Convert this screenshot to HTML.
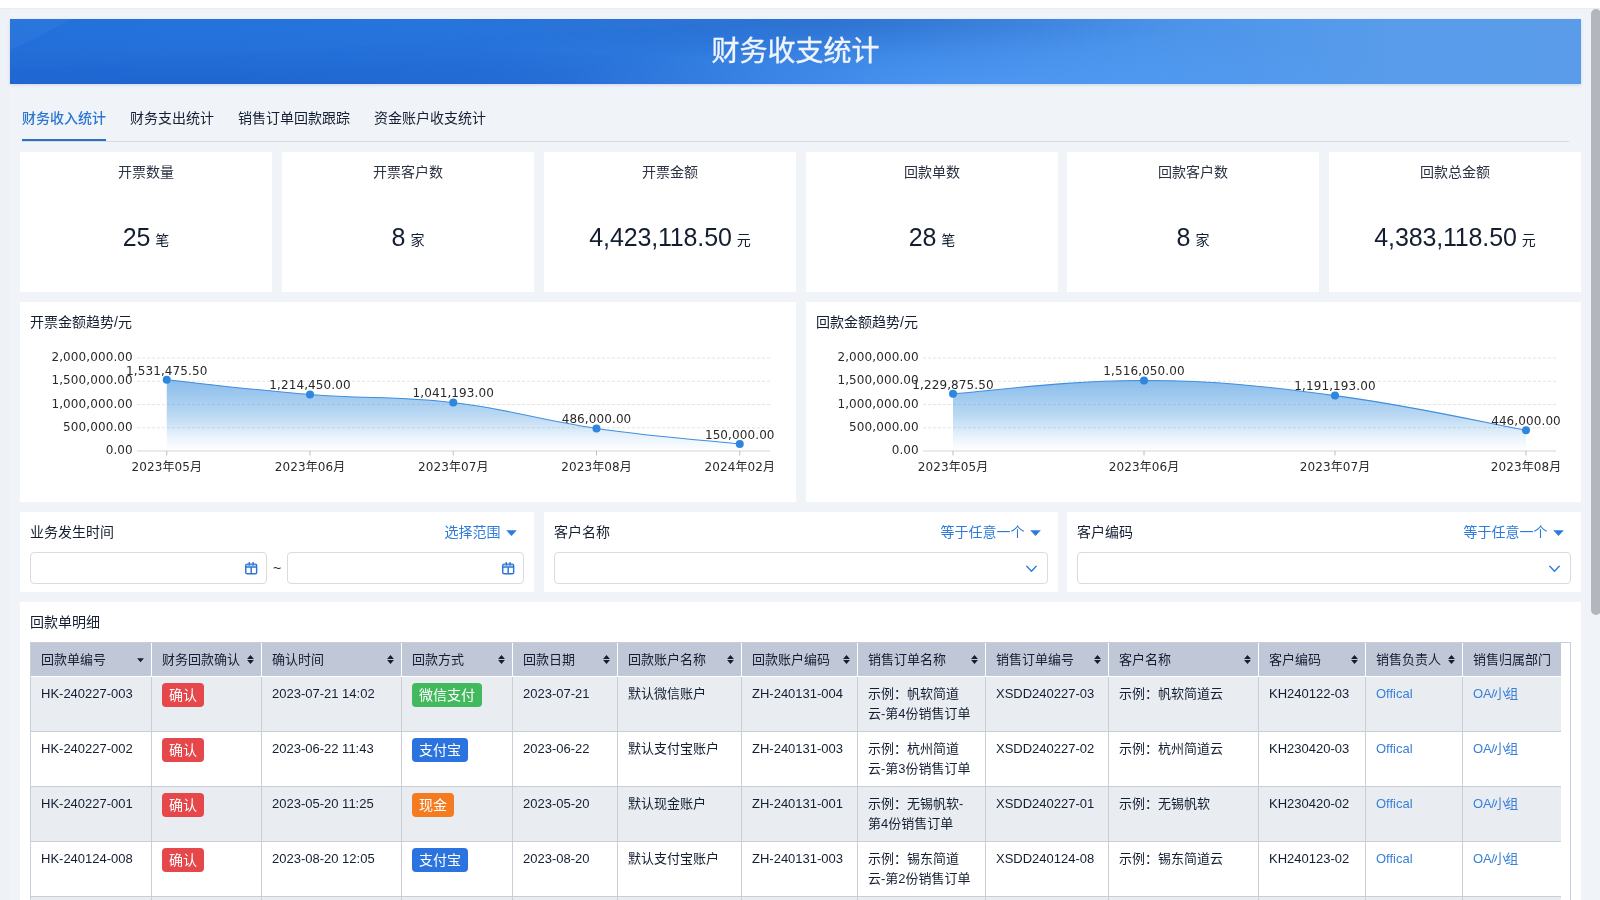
<!DOCTYPE html>
<html lang="zh-CN">
<head>
<meta charset="utf-8">
<title>财务收支统计</title>
<style>
*{box-sizing:border-box}
html,body{margin:0;padding:0}
body{width:1600px;height:900px;overflow:hidden;position:relative;background:#eef1f6;font-family:"Liberation Sans","Noto Sans CJK SC",sans-serif;color:#141e31;font-size:14px}
.page{position:absolute;left:0;top:0;width:1600px;height:900px;overflow:hidden;will-change:transform}
.topstrip{position:absolute;left:0;top:0;width:1600px;height:9px;background:#fff;border-bottom:1px solid #e9ecf1}
.main{position:absolute;left:10px;top:9px;width:1581px;height:891px;background:#f0f4f8}
.sbtrack{position:absolute;left:1581px;top:9px;width:19px;height:891px;background:#f0f4f8}
.sbthumb{position:absolute;left:1591px;top:9px;width:10px;height:606px;border-radius:5px;background:#b3b6bd}
.banner{position:absolute;left:10px;top:19px;width:1571px;height:65px;overflow:hidden;
 background:radial-gradient(ellipse 420px 60px at 62% 105%,rgba(90,165,255,.5),rgba(90,165,255,0) 100%),radial-gradient(ellipse 380px 50px at 52% -10%,rgba(25,70,160,.26),rgba(25,70,160,0) 100%),radial-gradient(ellipse 760px 55px at 14% -5%,rgba(30,120,230,.4),rgba(30,120,230,0) 100%),radial-gradient(ellipse 700px 45px at 12% 108%,rgba(26,88,196,.4),rgba(26,88,196,0) 100%),linear-gradient(90deg,#1f6bd7 0%,#2570d9 30%,#347fe0 52%,#4a93ea 72%,#589ceb 88%,#5a9cea 100%);box-shadow:0 1px 3px rgba(40,80,160,.18)}
.banner .waves{position:absolute;left:0;top:0}
.banner h1{position:absolute;left:0;top:2px;width:100%;margin:0;text-align:center;font-weight:400;font-size:28px;line-height:62px;color:#f1f5fb;letter-spacing:0;-webkit-text-stroke:0.35px #f1f5fb}
.tabs{position:absolute;left:22px;top:98px;width:1547px;height:44px;border-bottom:1px solid #d7dbe1;display:flex}
.tab{height:43px;line-height:40px;font-size:14px;margin-right:24px;color:#141e31;position:relative;white-space:nowrap}
.tab.on{color:#2a76d2;font-weight:500}
.tab.on:after{content:"";position:absolute;left:0;right:0;bottom:0;height:2px;background:#2e70c2}
.cards{position:absolute;left:20px;top:152px;width:1561px;height:140px}
.card{position:absolute;top:0;height:140px;background:#fff;text-align:center}
.ct1{margin-top:10px;height:20px;line-height:20px;font-size:14px;color:#2a3140}
.cv{margin-top:38px;line-height:34px;height:34px;white-space:nowrap}
.num{font-size:25px;letter-spacing:-0.15px;color:#141e31}
.unit{font-size:14px;margin-left:5px;color:#141e31;position:relative;top:-1px}
.row2{position:absolute;left:20px;top:302px;width:1561px;height:200px}
.panel{background:#fff;position:absolute;top:0;height:200px}
.ptitle{position:absolute;left:10px;top:10px;font-size:14px;line-height:20px;color:#141e31}
.ct{font-family:"DejaVu Sans","Noto Sans CJK SC",sans-serif;font-size:12px;fill:#2a2a2a;letter-spacing:0.1px}
.row3{position:absolute;left:20px;top:512px;width:1561px;height:80px}
.filter{position:absolute;top:0;height:80px;background:#fff}
.flabel{position:absolute;left:10px;top:10px;line-height:20px;font-size:14px}
.fmode{position:absolute;right:17px;top:10px;line-height:20px;font-size:14px;color:#2f7bdb;display:flex;align-items:center}
.fmode .tri{margin-left:5.5px;margin-top:1px}
.inp{position:absolute;top:40px;height:32px;border:1px solid #d9dbdf;border-radius:4px;background:#fff}
.inp .cal{position:absolute;right:8px;top:9px}
.inp .chev{position:absolute;right:10.5px;top:11.5px}
.tilde{position:absolute;top:41px;line-height:30px;font-size:14px;width:20px;text-align:center}
.tpanel{position:absolute;left:20px;top:602px;width:1561px;height:320px;background:#fff}
.tbl{position:absolute;left:10px;top:40px;width:1541px;height:300px;border:1px solid #c9ceda;overflow:hidden}
.tin{width:1530px;overflow:hidden}
.thead{display:flex;height:34px;width:1700px;background:#c0c8d8;border-bottom:1px solid #fff}
.th{flex:none;height:33px;line-height:33px;font-size:13px;padding:0 7.5px 0 10px;border-right:1px solid #fff;display:flex;align-items:center;justify-content:space-between;white-space:nowrap;color:#141e31}
.tr{display:flex;width:1700px;height:55px;background:#fff;border-bottom:1px solid #c9cdd6}
.tr.odd{background:#e9edf2}
.td{flex:none;padding:7px 10px 0 10px;font-size:13px;line-height:20px;border-right:1px solid #cbced5;color:#141e31;overflow:hidden}
.tag{display:inline-block;height:24px;line-height:24px;padding:0 7px;border-radius:4px;color:#fff;font-size:14px;margin-top:-1px;vertical-align:top}
.tag.r{background:#e5474b}.tag.g{background:#43b95e}.tag.b{background:#2b74e0}.tag.o{background:#f47b20}
.lk{color:#3a80d6}
.lk .sl{margin:0 -1.4px 0 -0.6px}
.lk .cj{letter-spacing:-1.1px}
</style>
</head>
<body>
<div class="page">
<div class="topstrip"></div>
<div class="main"></div>
<div class="sbtrack"></div>
<div class="sbthumb"></div>
<div class="banner"><svg class="waves" width="1571" height="65" viewBox="0 0 1571 65" preserveAspectRatio="none"><path d="M0 0 H62 C42 10 22 22 0 31 Z" fill="#fff" fill-opacity="0.035"/><path d="M0 52 C180 40 420 22 760 0 H0 Z" fill="#fff" fill-opacity="0.018"/><path d="M0 65 C300 52 700 30 1200 0 H760 C420 22 180 40 0 52 Z" fill="#fff" fill-opacity="0.008"/></svg><h1>财务收支统计</h1></div>
<div class="tabs"><div class="tab on">财务收入统计</div><div class="tab">财务支出统计</div><div class="tab">销售订单回款跟踪</div><div class="tab">资金账户收支统计</div></div>
<div class="cards"><div class="card" style="left:0px;width:252px"><div class="ct1">开票数量</div><div class="cv"><span class="num">25</span><span class="unit">笔</span></div></div><div class="card" style="left:262px;width:252px"><div class="ct1">开票客户数</div><div class="cv"><span class="num">8</span><span class="unit">家</span></div></div><div class="card" style="left:524px;width:252px"><div class="ct1">开票金额</div><div class="cv"><span class="num">4,423,118.50</span><span class="unit">元</span></div></div><div class="card" style="left:786px;width:252px"><div class="ct1">回款单数</div><div class="cv"><span class="num">28</span><span class="unit">笔</span></div></div><div class="card" style="left:1047px;width:252px"><div class="ct1">回款客户数</div><div class="cv"><span class="num">8</span><span class="unit">家</span></div></div><div class="card" style="left:1309px;width:252px"><div class="ct1">回款总金额</div><div class="cv"><span class="num">4,383,118.50</span><span class="unit">元</span></div></div></div>
<div class="row2">
<div class="panel" style="left:0;width:776px"><div class="ptitle">开票金额趋势/元</div><svg class="chart" width="776" height="200" viewBox="0 0 776 200" style="position:absolute;left:0;top:0">
<defs><linearGradient id="g20" x1="0" y1="0" x2="0" y2="1"><stop offset="0" stop-color="#3c91de" stop-opacity="0.6"/><stop offset="0.5" stop-color="#3c91de" stop-opacity="0.35"/><stop offset="0.8" stop-color="#3c91de" stop-opacity="0.11"/><stop offset="1" stop-color="#3c91de" stop-opacity="0"/></linearGradient></defs>
<line x1="117" x2="750" y1="56.00" y2="56.00" stroke="#e4e4e4" stroke-width="1" stroke-dasharray="3,2"/>
<line x1="117" x2="750" y1="79.25" y2="79.25" stroke="#e4e4e4" stroke-width="1" stroke-dasharray="3,2"/>
<line x1="117" x2="750" y1="102.50" y2="102.50" stroke="#e4e4e4" stroke-width="1" stroke-dasharray="3,2"/>
<line x1="117" x2="750" y1="125.75" y2="125.75" stroke="#e4e4e4" stroke-width="1" stroke-dasharray="3,2"/>
<text x="112.80000000000001" y="59.00" text-anchor="end" class="ct">2,000,000.00</text>
<text x="112.80000000000001" y="82.25" text-anchor="end" class="ct">1,500,000.00</text>
<text x="112.80000000000001" y="105.50" text-anchor="end" class="ct">1,000,000.00</text>
<text x="112.80000000000001" y="128.75" text-anchor="end" class="ct">500,000.00</text>
<text x="112.80000000000001" y="152.00" text-anchor="end" class="ct">0.00</text>
<path d="M146.75,77.79 C175.40,80.73 232.70,87.97 290.00,92.53 C347.30,97.09 375.95,93.81 433.25,100.58 C490.55,107.36 519.20,118.11 576.50,126.40 C633.80,134.69 691.10,138.90 719.75,142.02 L719.75,149.00 L146.75,149.00 Z" fill="url(#g20)"/>
<line x1="117" x2="750" y1="149.0" y2="149.0" stroke="#d6d6d6" stroke-width="1"/>
<line x1="146.75" x2="146.75" y1="149.0" y2="153.5" stroke="#adadad" stroke-width="0.8"/>
<line x1="290.00" x2="290.00" y1="149.0" y2="153.5" stroke="#adadad" stroke-width="0.8"/>
<line x1="433.25" x2="433.25" y1="149.0" y2="153.5" stroke="#adadad" stroke-width="0.8"/>
<line x1="576.50" x2="576.50" y1="149.0" y2="153.5" stroke="#adadad" stroke-width="0.8"/>
<line x1="719.75" x2="719.75" y1="149.0" y2="153.5" stroke="#adadad" stroke-width="0.8"/>
<path d="M146.75,77.79 C175.40,80.73 232.70,87.97 290.00,92.53 C347.30,97.09 375.95,93.81 433.25,100.58 C490.55,107.36 519.20,118.11 576.50,126.40 C633.80,134.69 691.10,138.90 719.75,142.02" fill="none" stroke="#3f8fde" stroke-width="1.05"/>
<circle cx="146.75" cy="77.79" r="4" fill="#2e86de"/>
<circle cx="290.00" cy="92.53" r="4" fill="#2e86de"/>
<circle cx="433.25" cy="100.58" r="4" fill="#2e86de"/>
<circle cx="576.50" cy="126.40" r="4" fill="#2e86de"/>
<circle cx="719.75" cy="142.02" r="4" fill="#2e86de"/>
<text x="146.75" y="72.59" text-anchor="middle" class="ct">1,531,475.50</text>
<text x="290.00" y="87.33" text-anchor="middle" class="ct">1,214,450.00</text>
<text x="433.25" y="95.38" text-anchor="middle" class="ct">1,041,193.00</text>
<text x="576.50" y="121.20" text-anchor="middle" class="ct">486,000.00</text>
<text x="719.75" y="136.82" text-anchor="middle" class="ct">150,000.00</text>
<text x="146.75" y="168.90" text-anchor="middle" class="ct">2023年05月</text>
<text x="290.00" y="168.90" text-anchor="middle" class="ct">2023年06月</text>
<text x="433.25" y="168.90" text-anchor="middle" class="ct">2023年07月</text>
<text x="576.50" y="168.90" text-anchor="middle" class="ct">2023年08月</text>
<text x="719.75" y="168.90" text-anchor="middle" class="ct">2024年02月</text>
</svg></div>
<div class="panel" style="left:786px;width:775px"><div class="ptitle">回款金额趋势/元</div><svg class="chart" width="775" height="200" viewBox="0 0 775 200" style="position:absolute;left:0;top:0">
<defs><linearGradient id="g806" x1="0" y1="0" x2="0" y2="1"><stop offset="0" stop-color="#3c91de" stop-opacity="0.6"/><stop offset="0.5" stop-color="#3c91de" stop-opacity="0.35"/><stop offset="0.8" stop-color="#3c91de" stop-opacity="0.11"/><stop offset="1" stop-color="#3c91de" stop-opacity="0"/></linearGradient></defs>
<line x1="117" x2="750" y1="56.00" y2="56.00" stroke="#e4e4e4" stroke-width="1" stroke-dasharray="3,2"/>
<line x1="117" x2="750" y1="79.25" y2="79.25" stroke="#e4e4e4" stroke-width="1" stroke-dasharray="3,2"/>
<line x1="117" x2="750" y1="102.50" y2="102.50" stroke="#e4e4e4" stroke-width="1" stroke-dasharray="3,2"/>
<line x1="117" x2="750" y1="125.75" y2="125.75" stroke="#e4e4e4" stroke-width="1" stroke-dasharray="3,2"/>
<text x="112.79999999999995" y="59.00" text-anchor="end" class="ct">2,000,000.00</text>
<text x="112.79999999999995" y="82.25" text-anchor="end" class="ct">1,500,000.00</text>
<text x="112.79999999999995" y="105.50" text-anchor="end" class="ct">1,000,000.00</text>
<text x="112.79999999999995" y="128.75" text-anchor="end" class="ct">500,000.00</text>
<text x="112.79999999999995" y="152.00" text-anchor="end" class="ct">0.00</text>
<path d="M147.00,91.81 C185.20,89.15 261.60,78.14 338.00,78.50 C414.40,78.86 452.60,83.66 529.00,93.61 C605.40,103.56 681.80,121.33 720.00,128.26 L720.00,149.00 L147.00,149.00 Z" fill="url(#g806)"/>
<line x1="117" x2="750" y1="149.0" y2="149.0" stroke="#d6d6d6" stroke-width="1"/>
<line x1="147.00" x2="147.00" y1="149.0" y2="153.5" stroke="#adadad" stroke-width="0.8"/>
<line x1="338.00" x2="338.00" y1="149.0" y2="153.5" stroke="#adadad" stroke-width="0.8"/>
<line x1="529.00" x2="529.00" y1="149.0" y2="153.5" stroke="#adadad" stroke-width="0.8"/>
<line x1="720.00" x2="720.00" y1="149.0" y2="153.5" stroke="#adadad" stroke-width="0.8"/>
<path d="M147.00,91.81 C185.20,89.15 261.60,78.14 338.00,78.50 C414.40,78.86 452.60,83.66 529.00,93.61 C605.40,103.56 681.80,121.33 720.00,128.26" fill="none" stroke="#3f8fde" stroke-width="1.05"/>
<circle cx="147.00" cy="91.81" r="4" fill="#2e86de"/>
<circle cx="338.00" cy="78.50" r="4" fill="#2e86de"/>
<circle cx="529.00" cy="93.61" r="4" fill="#2e86de"/>
<circle cx="720.00" cy="128.26" r="4" fill="#2e86de"/>
<text x="147.00" y="86.61" text-anchor="middle" class="ct">1,229,875.50</text>
<text x="338.00" y="73.30" text-anchor="middle" class="ct">1,516,050.00</text>
<text x="529.00" y="88.41" text-anchor="middle" class="ct">1,191,193.00</text>
<text x="720.00" y="123.06" text-anchor="middle" class="ct">446,000.00</text>
<text x="147.00" y="168.90" text-anchor="middle" class="ct">2023年05月</text>
<text x="338.00" y="168.90" text-anchor="middle" class="ct">2023年06月</text>
<text x="529.00" y="168.90" text-anchor="middle" class="ct">2023年07月</text>
<text x="720.00" y="168.90" text-anchor="middle" class="ct">2023年08月</text>
</svg></div>
</div>
<div class="row3">
<div class="filter" style="left:0;width:514px"><div class="flabel">业务发生时间</div><div class="fmode">选择范围<svg class="tri" width="11" height="6" viewBox="0 0 11 6"><path d="M0.2 0.2 H10.8 L5.5 5.9 Z" fill="#2f7bdb"/></svg></div>
<div class="inp" style="left:10px;width:237px"><svg class="cal" width="13" height="13" viewBox="0 0 13 13"><rect x="0.75" y="2.1" width="10.9" height="9.7" rx="1.4" fill="none" stroke="#2d74d6" stroke-width="1.45"/><path d="M0.75 4.9 H11.65 M6.2 4.9 V11.8" stroke="#2d74d6" stroke-width="1.45" fill="none"/><path d="M4.3 0.7 V3.2 M8.1 0.7 V3.2" stroke="#2d74d6" stroke-width="1.5" fill="none" stroke-linecap="round"/><rect x="1.4" y="2.8" width="9.6" height="1.6" fill="#6aa5ee" opacity="0.55"/></svg></div><div class="tilde" style="left:247px">~</div><div class="inp" style="left:267px;width:237px"><svg class="cal" width="13" height="13" viewBox="0 0 13 13"><rect x="0.75" y="2.1" width="10.9" height="9.7" rx="1.4" fill="none" stroke="#2d74d6" stroke-width="1.45"/><path d="M0.75 4.9 H11.65 M6.2 4.9 V11.8" stroke="#2d74d6" stroke-width="1.45" fill="none"/><path d="M4.3 0.7 V3.2 M8.1 0.7 V3.2" stroke="#2d74d6" stroke-width="1.5" fill="none" stroke-linecap="round"/><rect x="1.4" y="2.8" width="9.6" height="1.6" fill="#6aa5ee" opacity="0.55"/></svg></div></div>
<div class="filter" style="left:524px;width:514px"><div class="flabel">客户名称</div><div class="fmode">等于任意一个<svg class="tri" width="11" height="6" viewBox="0 0 11 6"><path d="M0.2 0.2 H10.8 L5.5 5.9 Z" fill="#2f7bdb"/></svg></div><div class="inp" style="left:10px;right:10px"><svg class="chev" width="11" height="8" viewBox="0 0 11 8"><path d="M0.8 1.3 L5.5 6.2 L10.2 1.3" fill="none" stroke="#2f7bdb" stroke-width="1.4" stroke-linecap="round" stroke-linejoin="round"/></svg></div></div>
<div class="filter" style="left:1047px;width:514px"><div class="flabel">客户编码</div><div class="fmode">等于任意一个<svg class="tri" width="11" height="6" viewBox="0 0 11 6"><path d="M0.2 0.2 H10.8 L5.5 5.9 Z" fill="#2f7bdb"/></svg></div><div class="inp" style="left:10px;right:10px"><svg class="chev" width="11" height="8" viewBox="0 0 11 8"><path d="M0.8 1.3 L5.5 6.2 L10.2 1.3" fill="none" stroke="#2f7bdb" stroke-width="1.4" stroke-linecap="round" stroke-linejoin="round"/></svg></div></div>
</div>
<div class="tpanel"><div class="ptitle">回款单明细</div>
<div class="tbl"><div class="tin"><div class="thead"><div class="th" style="width:121px"><span>回款单编号</span><svg class="si" width="7" height="9" viewBox="0 0 7 9"><path d="M3.5 7.2 L6.9 3.3 H0.1 Z" fill="#141e31"/></svg></div><div class="th" style="width:110px"><span>财务回款确认</span><svg class="si" width="7" height="9" viewBox="0 0 7 9"><path d="M3.5 0 L6.9 3.9 H0.1 Z M3.5 9 L6.9 5.1 H0.1 Z" fill="#141e31"/></svg></div><div class="th" style="width:140px"><span>确认时间</span><svg class="si" width="7" height="9" viewBox="0 0 7 9"><path d="M3.5 0 L6.9 3.9 H0.1 Z M3.5 9 L6.9 5.1 H0.1 Z" fill="#141e31"/></svg></div><div class="th" style="width:111px"><span>回款方式</span><svg class="si" width="7" height="9" viewBox="0 0 7 9"><path d="M3.5 0 L6.9 3.9 H0.1 Z M3.5 9 L6.9 5.1 H0.1 Z" fill="#141e31"/></svg></div><div class="th" style="width:105px"><span>回款日期</span><svg class="si" width="7" height="9" viewBox="0 0 7 9"><path d="M3.5 0 L6.9 3.9 H0.1 Z M3.5 9 L6.9 5.1 H0.1 Z" fill="#141e31"/></svg></div><div class="th" style="width:124px"><span>回款账户名称</span><svg class="si" width="7" height="9" viewBox="0 0 7 9"><path d="M3.5 0 L6.9 3.9 H0.1 Z M3.5 9 L6.9 5.1 H0.1 Z" fill="#141e31"/></svg></div><div class="th" style="width:116px"><span>回款账户编码</span><svg class="si" width="7" height="9" viewBox="0 0 7 9"><path d="M3.5 0 L6.9 3.9 H0.1 Z M3.5 9 L6.9 5.1 H0.1 Z" fill="#141e31"/></svg></div><div class="th" style="width:128px"><span>销售订单名称</span><svg class="si" width="7" height="9" viewBox="0 0 7 9"><path d="M3.5 0 L6.9 3.9 H0.1 Z M3.5 9 L6.9 5.1 H0.1 Z" fill="#141e31"/></svg></div><div class="th" style="width:123px"><span>销售订单编号</span><svg class="si" width="7" height="9" viewBox="0 0 7 9"><path d="M3.5 0 L6.9 3.9 H0.1 Z M3.5 9 L6.9 5.1 H0.1 Z" fill="#141e31"/></svg></div><div class="th" style="width:150px"><span>客户名称</span><svg class="si" width="7" height="9" viewBox="0 0 7 9"><path d="M3.5 0 L6.9 3.9 H0.1 Z M3.5 9 L6.9 5.1 H0.1 Z" fill="#141e31"/></svg></div><div class="th" style="width:107px"><span>客户编码</span><svg class="si" width="7" height="9" viewBox="0 0 7 9"><path d="M3.5 0 L6.9 3.9 H0.1 Z M3.5 9 L6.9 5.1 H0.1 Z" fill="#141e31"/></svg></div><div class="th" style="width:97px"><span>销售负责人</span><svg class="si" width="7" height="9" viewBox="0 0 7 9"><path d="M3.5 0 L6.9 3.9 H0.1 Z M3.5 9 L6.9 5.1 H0.1 Z" fill="#141e31"/></svg></div><div class="th" style="width:113px"><span>销售归属部门</span><svg class="si" width="7" height="9" viewBox="0 0 7 9"><path d="M3.5 0 L6.9 3.9 H0.1 Z M3.5 9 L6.9 5.1 H0.1 Z" fill="#141e31"/></svg></div></div>
<div class="tr odd"><div class="td" style="width:121px">HK-240227-003</div><div class="td" style="width:110px"><span class="tag r">确认</span></div><div class="td" style="width:140px">2023-07-21 14:02</div><div class="td" style="width:111px"><span class="tag g">微信支付</span></div><div class="td" style="width:105px">2023-07-21</div><div class="td" style="width:124px">默认微信账户</div><div class="td" style="width:116px">ZH-240131-004</div><div class="td" style="width:128px">示例：帆软简道<br>云-第4份销售订单</div><div class="td" style="width:123px">XSDD240227-03</div><div class="td" style="width:150px">示例：帆软简道云</div><div class="td" style="width:107px">KH240122-03</div><div class="td" style="width:97px"><span class="lk">Offical</span></div><div class="td" style="width:113px"><span class="lk">OA<span class="sl">/</span><span class="cj">小组</span></span></div></div>
<div class="tr "><div class="td" style="width:121px">HK-240227-002</div><div class="td" style="width:110px"><span class="tag r">确认</span></div><div class="td" style="width:140px">2023-06-22 11:43</div><div class="td" style="width:111px"><span class="tag b">支付宝</span></div><div class="td" style="width:105px">2023-06-22</div><div class="td" style="width:124px">默认支付宝账户</div><div class="td" style="width:116px">ZH-240131-003</div><div class="td" style="width:128px">示例：杭州简道<br>云-第3份销售订单</div><div class="td" style="width:123px">XSDD240227-02</div><div class="td" style="width:150px">示例：杭州简道云</div><div class="td" style="width:107px">KH230420-03</div><div class="td" style="width:97px"><span class="lk">Offical</span></div><div class="td" style="width:113px"><span class="lk">OA<span class="sl">/</span><span class="cj">小组</span></span></div></div>
<div class="tr odd"><div class="td" style="width:121px">HK-240227-001</div><div class="td" style="width:110px"><span class="tag r">确认</span></div><div class="td" style="width:140px">2023-05-20 11:25</div><div class="td" style="width:111px"><span class="tag o">现金</span></div><div class="td" style="width:105px">2023-05-20</div><div class="td" style="width:124px">默认现金账户</div><div class="td" style="width:116px">ZH-240131-001</div><div class="td" style="width:128px">示例：无锡帆软-<br>第4份销售订单</div><div class="td" style="width:123px">XSDD240227-01</div><div class="td" style="width:150px">示例：无锡帆软</div><div class="td" style="width:107px">KH230420-02</div><div class="td" style="width:97px"><span class="lk">Offical</span></div><div class="td" style="width:113px"><span class="lk">OA<span class="sl">/</span><span class="cj">小组</span></span></div></div>
<div class="tr "><div class="td" style="width:121px">HK-240124-008</div><div class="td" style="width:110px"><span class="tag r">确认</span></div><div class="td" style="width:140px">2023-08-20 12:05</div><div class="td" style="width:111px"><span class="tag b">支付宝</span></div><div class="td" style="width:105px">2023-08-20</div><div class="td" style="width:124px">默认支付宝账户</div><div class="td" style="width:116px">ZH-240131-003</div><div class="td" style="width:128px">示例：锡东简道<br>云-第2份销售订单</div><div class="td" style="width:123px">XSDD240124-08</div><div class="td" style="width:150px">示例：锡东简道云</div><div class="td" style="width:107px">KH240123-02</div><div class="td" style="width:97px"><span class="lk">Offical</span></div><div class="td" style="width:113px"><span class="lk">OA<span class="sl">/</span><span class="cj">小组</span></span></div></div>
<div class="tr odd"><div class="td" style="width:121px">HK-240124-007</div><div class="td" style="width:110px"><span class="tag r">确认</span></div><div class="td" style="width:140px">2023-08-12 10:20</div><div class="td" style="width:111px"><span class="tag g">微信支付</span></div><div class="td" style="width:105px">2023-08-12</div><div class="td" style="width:124px">默认微信账户</div><div class="td" style="width:116px">ZH-240131-004</div><div class="td" style="width:128px">示例：锡东简道<br>云-第1份销售订单</div><div class="td" style="width:123px">XSDD240124-07</div><div class="td" style="width:150px">示例：锡东简道云</div><div class="td" style="width:107px">KH240123-02</div><div class="td" style="width:97px"><span class="lk">Offical</span></div><div class="td" style="width:113px"><span class="lk">OA<span class="sl">/</span><span class="cj">小组</span></span></div></div>
</div></div></div>
</div>
</body>
</html>
